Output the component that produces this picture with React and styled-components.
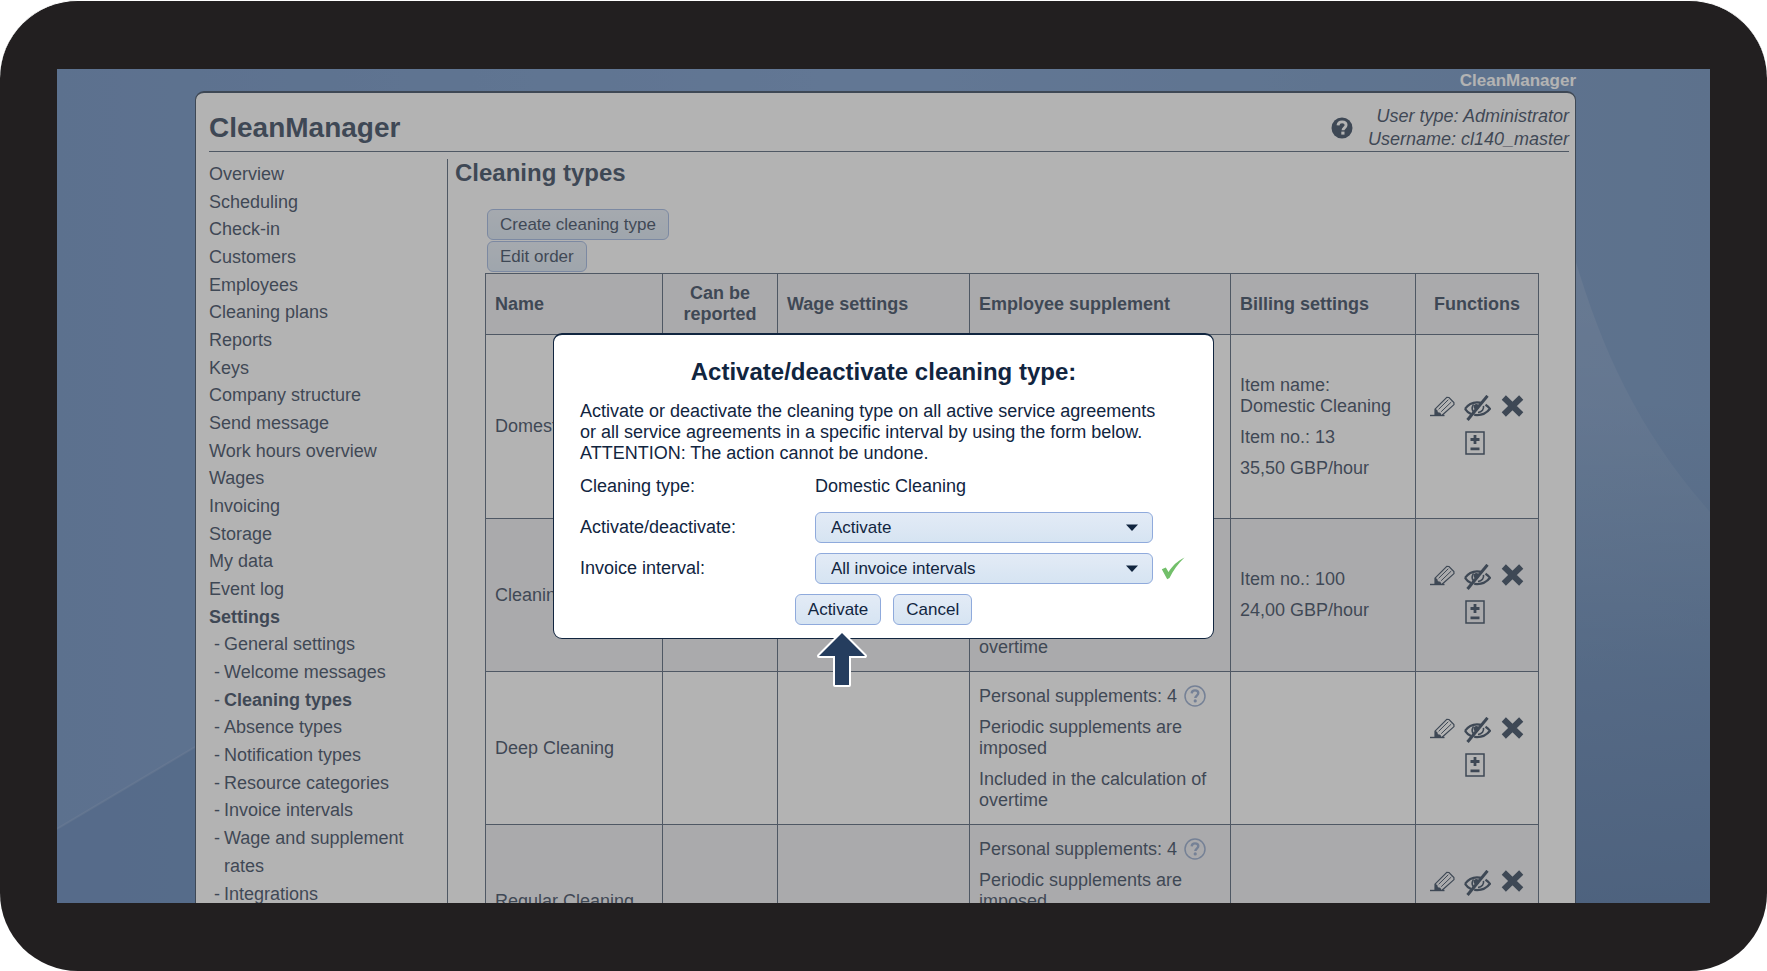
import React from "react"
import styled, { createGlobalStyle, css } from "styled-components"

const colors = {
  navy: `#11253f`,
  line: `#33475f`,
  frame: `#221f20`,
  stripe: `#ededf0`,
  controlTop: `#e3ebf6`,
  controlBottom: `#d6e4f2`,
  controlBorder: `#8faadc`,
  hint: `#8199c4`,
  valid: `#72bf6a`,
  arrow: `#253d5e`,
}

const GlobalStyle = createGlobalStyle`
  *, *::before, *::after {
    box-sizing: border-box;
  }

  body {
    margin: 0;
    background: #fff;
    color: ${colors.navy};
    font: 18px/21px "Liberation Sans", Arial, sans-serif;
  }
`

const control = css`
  height: 31px;
  border: 1px solid ${colors.controlBorder};
  border-radius: 6px;
  background: linear-gradient(${colors.controlTop}, ${colors.controlBottom});
  color: inherit;
  font-family: inherit;
  font-size: 17px;
  line-height: 20px;
  cursor: pointer;
`

const Device = styled.div`
  height: 100vh;
  padding: 68px 57px;
  border-top: 1px solid #fff;
  border-radius: 78px;
  background: ${colors.frame};
`

const Screen = styled.div`
  position: relative;
  height: 100%;
  padding: 0 134px 0 138px;
  overflow: hidden;
  background: linear-gradient(90deg, #4f78b4, #5b86c0 50%, #5079b0);
`

const Wallpaper = styled.svg`
  position: absolute;
  inset: 0;
  width: 100%;
  height: 100%;
`

const Page = styled.div`
  position: relative;
`

const Brand = styled.div`
  height: 22px;
  color: #fff;
  font-size: 17px;
  font-weight: bold;
  line-height: 24px;
  text-align: right;
`

const Panel = styled.div`
  padding: 8px 6px 0 13px;
  border: 1px solid ${colors.navy};
  border-top-width: 2px;
  border-radius: 9px;
  background: #fff;
`

const Header = styled.header`
  display: flex;
  align-items: center;
  height: 51px;
  padding-top: 4px;
  border-bottom: 1px solid ${colors.line};
`

const Logo = styled.h1`
  flex: 1;
  margin: 0;
  font-size: 28px;
  line-height: 32px;
`

const UserInfo = styled.div`
  margin-left: 15px;
  font-style: italic;
  line-height: 23px;
  text-align: right;
`

const Columns = styled.div`
  display: flex;
  padding-top: 7px;
`

const Sidebar = styled.nav`
  flex: 0 0 239px;
  padding-top: 1px;
  border-right: 1px solid ${colors.line};
`

const Menu = styled.ul`
  margin: 0;
  padding: 0;
  list-style: none;
  line-height: 28px;

  li:nth-child(3n) {
    line-height: 27px;
  }
`

const MenuItem = styled.li`
  display: flex;
  padding: ${props => (props.$sub ? `0 20px 0 5px` : `0`)};

  &::before {
    flex: none;
    content: ${props => (props.$sub ? `"-"` : `none`)};
    width: 10px;
  }
`

const MenuLink = styled.a`
  flex: 1;
  color: inherit;
  font-weight: ${props => (props.$active ? `bold` : `normal`)};
  text-decoration: none;
`

const Main = styled.main`
  flex: 1;
  padding: 0 33px 0 7px;
`

const PageTitle = styled.h2`
  margin: 0 0 22px;
  font-size: 24px;
  line-height: 28px;
`

const Content = styled.div`
  margin-left: 30px;
`

const Actions = styled.div`
  display: flex;
  flex-direction: column;
  align-items: flex-start;
  gap: 1px;
  padding-left: 2px;
`

const Button = styled.button`
  ${control}
  padding: 0 12px;
`

const Table = styled.table`
  width: 100%;
  margin-top: 1px;
  border-collapse: collapse;
  table-layout: fixed;

  th,
  td {
    padding: 0 9px;
    border: 1px solid ${colors.line};
    text-align: left;
  }
`

const Row = styled.tr`
  height: ${props => props.$height};
  background: ${props => (props.$striped ? colors.stripe : `#fff`)};
`

const CenteredHeading = styled.th`
  && {
    text-align: center;
  }
`

const Line = styled.p`
  margin: 0;

  & + & {
    margin-top: 10px;
  }
`

const Hint = styled.svg`
  width: 22px;
  height: 22px;
  margin: -2px 0 -2px 2px;
  vertical-align: -3px;
`

const Functions = styled.div`
  display: grid;
  grid-template-columns: repeat(3, 25px);
  justify-content: center;
  justify-items: center;
  gap: 10px;
  padding-bottom: 3px;
`

const IconButton = styled.button`
  display: flex;
  grid-column: ${props => (props.$second ? `2` : `auto`)};
  justify-self: ${props => (props.$second ? `start` : `center`)};
  padding: 0;
  border: none;
  background: none;
  color: inherit;
  cursor: pointer;
`

const Overlay = styled.div`
  position: absolute;
  inset: 0;
  display: flex;
  align-items: center;
  justify-content: center;
  background: rgba(106, 106, 106, 0.51);
`

const Dialog = styled.section`
  width: 661px;
  padding: 23px 26px 13px;
  border: 1px solid ${colors.navy};
  border-top-width: 2px;
  border-radius: 9px;
  background: #fff;
`

const DialogTitle = styled.h2`
  margin: 0 0 15px;
  font-size: 24px;
  line-height: 28px;
  text-align: center;
`

const Intro = styled.p`
  margin: 0;
  padding-right: 15px;
`

const Form = styled.form`
  display: grid;
  grid-template-columns: 235px 338px 1fr;
  align-items: center;
  row-gap: 10px;
  margin-top: 12px;
`

const FieldText = styled.span`
  padding-bottom: 5px;
`

const SelectBox = styled.div`
  position: relative;
`

const Select = styled.select`
  ${control}
  display: block;
  width: 100%;
  padding: 0 40px 0 15px;
  appearance: none;
`

const Caret = styled.svg`
  position: absolute;
  top: 12px;
  right: 15px;
  pointer-events: none;
`

const Valid = styled.svg`
  margin-left: 8px;
`

const FormButtons = styled.div`
  display: flex;
  grid-column: 1 / -1;
  justify-content: center;
  gap: 12px;
`

const ArrowAnchor = styled.div`
  position: relative;
`

const Pointer = styled.svg`
  position: absolute;
  top: 36px;
  left: 21px;
`

const menu = [
  "Overview",
  "Scheduling",
  "Check-in",
  "Customers",
  "Employees",
  "Cleaning plans",
  "Reports",
  "Keys",
  "Company structure",
  "Send message",
  "Work hours overview",
  "Wages",
  "Invoicing",
  "Storage",
  "My data",
  "Event log",
  "Settings",
]

const settingsMenu = [
  "General settings",
  "Welcome messages",
  "Cleaning types",
  "Absence types",
  "Notification types",
  "Resource categories",
  "Invoice intervals",
  "Wage and supplement rates",
  "Integrations",
]

const active = ["Settings", "Cleaning types"]

const cleaningTypes = [
  {
    name: "Domestic Cleaning",
    height: "184px",
    billing: ["Item name: Domestic Cleaning", "Item no.: 13", "35,50 GBP/hour"],
  },
  {
    name: "Cleaning",
    height: "153px",
    billing: ["Item no.: 100", "24,00 GBP/hour"],
  },
  { name: "Deep Cleaning", height: "153px", billing: [] },
  { name: "Regular Cleaning", height: "153px", billing: [] },
]

const HelpIcon = () => (
  <svg width="22" height="22" viewBox="0 0 22 22">
    <circle cx="11" cy="11" r="10.5" fill={colors.navy} />
    <path
      d="M7 8.4C7.2 6 8.8 4.9 11.1 4.9c2.4 0 4 1.3 4 3.2 0 2.7-3.1 2.8-3.1 5.1"
      fill="none"
      stroke="#fff"
      strokeWidth="2.9"
    />
    <rect x="10.3" y="14.6" width="3.2" height="3" fill="#fff" />
  </svg>
)

const HintIcon = () => (
  <Hint viewBox="0 0 22 22">
    <circle cx="11" cy="11" r="10" fill="none" stroke={colors.hint} strokeWidth="1.5" />
    <path
      d="M7.7 8.4C7.8 6.4 9.1 5.4 11 5.4c2 0 3.3 1.1 3.3 2.7 0 2.4-3 2.5-3 5"
      fill="none"
      stroke={colors.hint}
      strokeWidth="2.4"
    />
    <circle cx="11.2" cy="15.9" r="1.6" fill={colors.hint} />
  </Hint>
)

const EditIcon = () => (
  <svg width="25" height="22" viewBox="0 0 25 22" fill="none" stroke={colors.navy}>
    <path d="M0 20.5h14.5" strokeWidth="1.4" />
    <path d="M5 14.2 16.8 2.3l2.2.2 4.9 5 .1 2.1L12 20.3l-7 .2z" strokeWidth="1.2" />
    <path d="M8.6 14.3 18.3 4.7M11.2 16.7 21.3 7" strokeWidth="1" />
    <path d="M5 13.8v6.7l6.6-.1-1.2-2.6-2.5-.6-.6-2.2z" fill={colors.navy} stroke="none" />
  </svg>
)

const HideIcon = () => (
  <svg width="27" height="26" viewBox="0 0 27 26" fill="none" stroke={colors.navy}>
    <path
      d="M1 13.8C4 9.6 8.3 7.3 13 7.3c2 0 3.6.3 5 .8M21.500 9.800c1.900 1.100 3.400 2.500 4.500 4-3.200 4-7.700 6.300-12.800 6.300l-3-.2M7 19C4.600 17.900 2.500 16 1 13.800"
      strokeWidth="2.2"
    />
    <path d="M9.5 9.3c-1.9 3.2-1.4 6 .3 7.6M19.5 10.8c.6 3.2-1.5 6.3-5.5 6.7" strokeWidth="1.6" />
    <circle cx="12.3" cy="11.7" r="2.6" fill={colors.navy} stroke="none" />
    <path d="M3.5 25 23.5.8" strokeWidth="3" />
  </svg>
)

const DeleteIcon = () => (
  <svg width="23" height="22" viewBox="0 0 23 22">
    <path d="m2.8 2.5 17.4 17M20.2 2.5 2.8 19.5" stroke={colors.navy} strokeWidth="6" />
  </svg>
)

const SupplementIcon = () => (
  <svg width="20" height="24" viewBox="0 0 20 24" fill="none" stroke={colors.navy}>
    <rect x="1" y="1" width="18" height="22" strokeWidth="1.5" />
    <path d="M5.5 8.5h9M10 4v9M5.5 17.8h9" strokeWidth="2.8" />
  </svg>
)

const CheckIcon = () => (
  <Valid width="24" height="23" viewBox="0 0 24 23">
    <path
      d="M.8 12.3 4.8 10.6l2.7 4.3C11.5 9 16 4.2 23.5.5 17 6.8 12.2 13.5 8.5 21l-2.3 1.3z"
      fill={colors.valid}
    />
  </Valid>
)

const MenuEntry = ({ label, sub }) => (
  <MenuItem $sub={sub}>
    <MenuLink href="#" $active={active.includes(label)}>
      {label}
    </MenuLink>
  </MenuItem>
)

const TypeRow = ({ type, striped }) => (
  <Row $height={type.height} $striped={striped}>
    <td>{type.name}</td>
    <td />
    <td />
    <td>
      <Line>
        Personal supplements: 4 <HintIcon />
      </Line>
      <Line>Periodic supplements are imposed</Line>
      <Line>Included in the calculation of overtime</Line>
    </td>
    <td>
      {type.billing.map(line => (
        <Line key={line}>{line}</Line>
      ))}
    </td>
    <td>
      <Functions>
        <IconButton aria-label="Edit">
          <EditIcon />
        </IconButton>
        <IconButton aria-label="Activate/deactivate">
          <HideIcon />
        </IconButton>
        <IconButton aria-label="Delete">
          <DeleteIcon />
        </IconButton>
        <IconButton aria-label="Supplements" $second>
          <SupplementIcon />
        </IconButton>
      </Functions>
    </td>
  </Row>
)

const DropDown = ({ id, children }) => (
  <SelectBox>
    <Select id={id}>{children}</Select>
    <Caret width="12" height="7" viewBox="0 0 12 7">
      <path d="M0 .5h12L6 7z" fill={colors.navy} />
    </Caret>
  </SelectBox>
)

const ActivateDialog = () => (
  <Dialog role="dialog" aria-labelledby="dialog-title">
    <DialogTitle id="dialog-title">Activate/deactivate cleaning type:</DialogTitle>
    <Intro>
      Activate or deactivate the cleaning type on all active service agreements
      or all service agreements in a specific interval by using the form below.
      <br />
      ATTENTION: The action cannot be undone.
    </Intro>
    <Form onSubmit={e => e.preventDefault()}>
      <FieldText>Cleaning type:</FieldText>
      <FieldText>Domestic Cleaning</FieldText>
      <span />
      <label htmlFor="action">Activate/deactivate:</label>
      <DropDown id="action">
        <option>Activate</option>
        <option>Deactivate</option>
      </DropDown>
      <span />
      <label htmlFor="interval">Invoice interval:</label>
      <DropDown id="interval">
        <option>All invoice intervals</option>
      </DropDown>
      <CheckIcon />
      <FormButtons>
        <ArrowAnchor>
          <Button type="submit">Activate</Button>
          <Pointer width="52" height="58" viewBox="0 0 52 58">
            <path
              d="M26 3 49 26H33V55H19V26H3z"
              fill={colors.arrow}
              stroke="#fff"
              strokeWidth="4"
              strokeLinejoin="round"
              paintOrder="stroke"
            />
          </Pointer>
        </ArrowAnchor>
        <Button type="button">Cancel</Button>
      </FormButtons>
    </Form>
  </Dialog>
)

const App = () => (
  <>
    <GlobalStyle />
    <Device>
      <Screen>
        <Wallpaper viewBox="0 0 1653 834" preserveAspectRatio="none">
          <defs>
            <linearGradient id="dusk" x1="0" y1="0" x2="0" y2="1">
              <stop offset="0.4" stopColor="#204a84" stopOpacity="0" />
              <stop offset="1" stopColor="#204a84" stopOpacity="0.65" />
            </linearGradient>
            <linearGradient id="beam" x1="0" y1="0" x2="0" y2="1">
              <stop offset="0" stopColor="#fff" stopOpacity="0.12" />
              <stop offset="1" stopColor="#fff" stopOpacity="0" />
            </linearGradient>
          </defs>
          <path d="M0 760 138 678V834H0z" fill="#2c5a9c" opacity="0.35" />
          <path d="M0 760 138 678" stroke="#fff" strokeWidth="2" opacity="0.1" />
          <path d="M1500 0h153v834h-153z" fill="url(#dusk)" />
          <path d="M1518 190C1545 280 1580 360 1653 443V620H1518z" fill="url(#beam)" />
        </Wallpaper>
        <Page>
          <Brand>CleanManager</Brand>
          <Panel>
            <Header>
              <Logo>CleanManager</Logo>
              <IconButton aria-label="Help">
                <HelpIcon />
              </IconButton>
              <UserInfo>
                User type: Administrator
                <br />
                Username: cl140_master
              </UserInfo>
            </Header>
            <Columns>
              <Sidebar>
                <Menu>
                  {menu.map(label => (
                    <MenuEntry key={label} label={label} />
                  ))}
                  {settingsMenu.map(label => (
                    <MenuEntry key={label} label={label} sub />
                  ))}
                </Menu>
              </Sidebar>
              <Main>
                <PageTitle>Cleaning types</PageTitle>
                <Content>
                  <Actions>
                    <Button>Create cleaning type</Button>
                    <Button>Edit order</Button>
                  </Actions>
                  <Table>
                    <colgroup>
                      <col width="177" />
                      <col width="115" />
                      <col width="192" />
                      <col width="261" />
                      <col width="185" />
                      <col width="123" />
                    </colgroup>
                    <thead>
                      <Row $height="61px" $striped>
                        <th>Name</th>
                        <CenteredHeading>Can be reported</CenteredHeading>
                        <th>Wage settings</th>
                        <th>Employee supplement</th>
                        <th>Billing settings</th>
                        <CenteredHeading>Functions</CenteredHeading>
                      </Row>
                    </thead>
                    <tbody>
                      {cleaningTypes.map((type, i) => (
                        <TypeRow key={type.name} type={type} striped={i % 2 === 1} />
                      ))}
                    </tbody>
                  </Table>
                </Content>
              </Main>
            </Columns>
          </Panel>
        </Page>
        <Overlay>
          <ActivateDialog />
        </Overlay>
      </Screen>
    </Device>
  </>
)

export default App
